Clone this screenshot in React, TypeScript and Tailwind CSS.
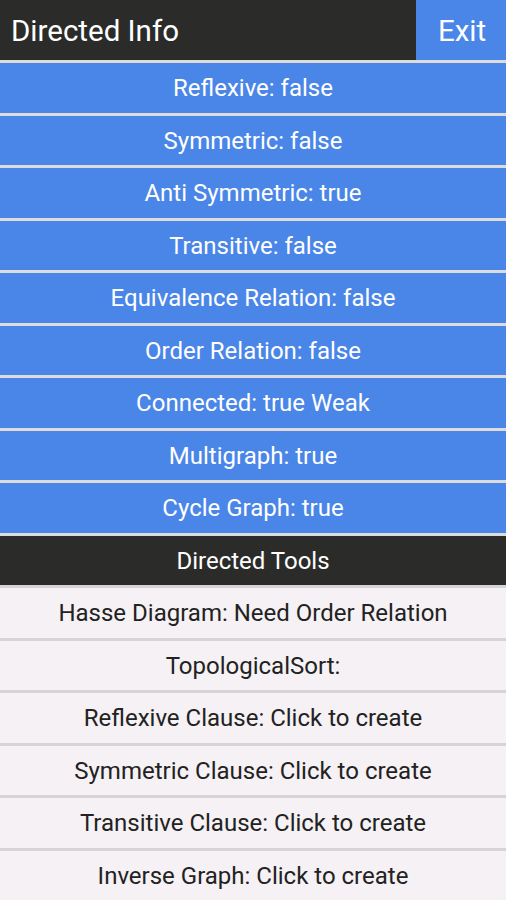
const infoRows = [
  'Reflexive: false',
  'Symmetric: false',
  'Anti Symmetric: true',
  'Transitive: false',
  'Equivalence Relation: false',
  'Order Relation: false',
  'Connected: true Weak',
  'Multigraph: true',
  'Cycle Graph: true',
]

const toolRows = [
  'Hasse Diagram: Need Order Relation',
  'TopologicalSort:',
  'Reflexive Clause: Click to create',
  'Symmetric Clause: Click to create',
  'Transitive Clause: Click to create',
  'Inverse Graph: Click to create',
]

export default function App() {
  return (
    <div className="w-[506px] h-[900px] overflow-hidden bg-[#f5f1f4] font-['Roboto',sans-serif]">
      {/* Header */}
      <div className="flex h-[60px]">
        <div className="flex-1 bg-[#2b2c2a] flex items-center pl-[11px] pt-[3px] text-white text-[29.5px]">
          Directed Info
        </div>
        <button className="w-[90px] bg-[#4a86e8] text-white text-[29.5px] pt-[3px] pl-[2px] flex items-center justify-center">
          Exit
        </button>
      </div>

      {infoRows.map((row) => (
        <div
          key={row}
          className="h-[52.5px] border-t-[3px] border-[#dcdcdc] bg-[#4a86e8] flex items-center justify-center pt-[1px] text-white text-[24px]"
        >
          {row}
        </div>
      ))}

      <div className="h-[52.5px] border-t-[3px] border-[#dcdcdc] bg-[#2b2c2a] flex items-center justify-center pt-[1px] text-white text-[24px]">
        Directed Tools
      </div>

      {toolRows.map((row) => (
        <div
          key={row}
          className="h-[52.5px] border-t-[3px] border-[#d6d4d6] bg-[#f5f1f4] flex items-center justify-center pt-[1px] text-[#222] text-[24px]"
        >
          {row}
        </div>
      ))}
    </div>
  )
}
